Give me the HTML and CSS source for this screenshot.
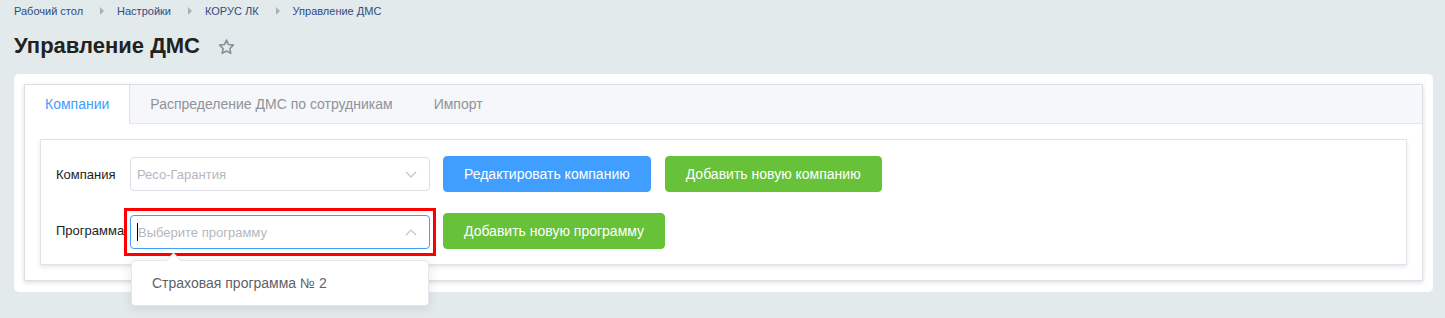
FILE: index.html
```html
<!DOCTYPE html>
<html lang="ru">
<head>
<meta charset="utf-8">
<title>Управление ДМС</title>
<link rel="stylesheet" href="styles.css">
</head>
<body>
<nav class="breadcrumb">
  <a class="crumb">Рабочий стол</a><span class="crumb-sep"></span>
  <a class="crumb">Настройки</a><span class="crumb-sep"></span>
  <a class="crumb">КОРУС ЛК</a><span class="crumb-sep"></span>
  <span class="crumb">Управление ДМС</span>
</nav>
<div class="page-head">
  <h1 class="page-title">Управление ДМС</h1>
  <svg class="star" width="19" height="18" viewBox="0 0 24 24"><path d="M12 2.8l2.8 5.9 6.4.8-4.7 4.5 1.2 6.4L12 17.3l-5.7 3.1 1.2-6.4-4.7-4.5 6.4-.8z" fill="none" stroke="#8a9199" stroke-width="2.2" stroke-linejoin="round"/></svg>
</div>
<div class="panel">
  <div class="tabs">
    <div class="tabs-header">
      <div class="tab active">Компании</div>
      <div class="tab">Распределение ДМС по сотрудникам</div>
      <div class="tab">Импорт</div>
    </div>
    <div class="tabs-content">
      <div class="form-card">
        <div class="form-row">
          <label class="form-label">Компания</label>
          <div class="select-wrap">
            <div class="select">
              <span class="select-value">Ресо-Гарантия</span>
              <svg class="chevron" width="12" height="7" viewBox="0 0 12 7"><polyline points="1,1 6,6 11,1" fill="none" stroke="#c0c4cc" stroke-width="1.2"/></svg>
            </div>
          </div>
          <button class="btn btn-primary">Редактировать компанию</button>
          <button class="btn btn-success btn-gap">Добавить новую компанию</button>
        </div>
        <div class="form-row row-gap">
          <label class="form-label">Программа</label>
          <div class="select-wrap">
            <div class="select focused">
              <span class="cursor"></span>
              <span class="select-value">Выберите программу</span>
              <svg class="chevron" width="12" height="7" viewBox="0 0 12 7"><polyline points="1,6 6,1 11,6" fill="none" stroke="#c0c4cc" stroke-width="1.2"/></svg>
            </div>
            <div class="highlight"></div>
            <div class="dropdown">
              <span class="dropdown-arrow"></span>
              <div class="dropdown-item">Страховая программа № 2</div>
            </div>
          </div>
          <button class="btn btn-success">Добавить новую программу</button>
        </div>
      </div>
    </div>
  </div>
</div>
</body>
</html>
```
FILE: styles.css
```css
html {
  background: #e3eaeb;
}
body {
  margin: 0;
  padding: 4px 12px 0 14px;
  min-height: 100vh;
  box-sizing: border-box;
  background: #e3eaeb;
  font-family: "Liberation Sans", Arial, sans-serif;
}
.breadcrumb {
  display: flex;
  align-items: center;
  height: 14px;
  font-size: 11px;
  line-height: 14px;
  color: #2f4c82;
}
.crumb {
  color: #2f4c82;
  text-decoration: none;
}
.crumb-sep {
  width: 0;
  height: 0;
  border-left: 4px solid #a9b1b8;
  border-top: 4px solid transparent;
  border-bottom: 4px solid transparent;
  margin: 0 13px 0 17px;
}
.page-head {
  display: flex;
  align-items: center;
  height: 30px;
  margin-top: 13px;
}
.page-title {
  margin: 0;
  font-size: 22px;
  line-height: 30px;
  font-weight: 700;
  color: #222;
}
.star {
  margin-left: 17px;
  margin-top: 1px;
}
.panel {
  margin-top: 13px;
  background: #fff;
  border-radius: 5px;
  padding: 10px 10px 11px 10px;
}
.tabs {
  border: 1px solid #dcdfe6;
  background: #fff;
  box-shadow: 0 2px 4px 0 rgba(0, 0, 0, 0.1), 0 0 6px 0 rgba(0, 0, 0, 0.04);
}
.tabs-header {
  display: flex;
  background: #f5f7fa;
  border-bottom: 1px solid #e4e7ed;
  height: 38px;
}
.tab {
  height: 38px;
  line-height: 38px;
  padding: 0 20px;
  font-size: 14px;
  color: #909399;
  border-right: 1px solid transparent;
  border-bottom: 1px solid transparent;
  margin-bottom: -1px;
}
.tab.active {
  background: #fff;
  color: #409eff;
  border-right-color: #dcdfe6;
  border-bottom-color: #fff;
}
.tabs-content {
  padding: 15px;
}
.form-card {
  border: 1px solid #e1e4ea;
  box-shadow: 0 2px 4px 0 rgba(0, 0, 0, 0.1);
  padding: 16px 15px 15px;
}
.form-row {
  display: flex;
  align-items: center;
}
.row-gap {
  margin-top: 20px;
}
.form-label {
  width: 74px;
  flex-shrink: 0;
  white-space: nowrap;
  font-size: 13px;
  color: #1d1d1d;
}
.select-wrap {
  position: relative;
  width: 300px;
  flex-shrink: 0;
}
.select {
  box-sizing: border-box;
  height: 34px;
  border: 1px solid #dcdfe6;
  border-radius: 4px;
  padding: 0 6px;
  display: flex;
  align-items: center;
  background: #fff;
  font-size: 13px;
  color: #b5b8be;
}
.select.focused {
  border-color: #409eff;
  margin-top: 3px;
}
.cursor {
  width: 1px;
  height: 18px;
  background: #000;
}
.chevron {
  margin-left: auto;
  margin-right: 6px;
}
.highlight {
  position: absolute;
  left: -6px;
  right: -6px;
  top: -4px;
  bottom: -7px;
  border: 3px solid #ff0000;
  pointer-events: none;
}
.dropdown {
  position: absolute;
  top: 48px;
  left: 1px;
  width: 298px;
  box-sizing: border-box;
  background: #fff;
  border: 1px solid #e4e7ed;
  border-radius: 4px;
  box-shadow: 0 2px 12px 0 rgba(0, 0, 0, 0.1);
  padding: 5px 0;
  z-index: 5;
}
.dropdown-arrow {
  position: absolute;
  top: -6px;
  left: 36px;
  width: 10px;
  height: 10px;
  background: #fff;
  border-left: 1px solid #e4e7ed;
  border-top: 1px solid #e4e7ed;
  transform: rotate(45deg);
}
.dropdown-item {
  position: relative;
  padding: 0 20px;
  line-height: 34px;
  font-size: 14px;
  color: #606266;
}
.btn {
  box-sizing: border-box;
  height: 36px;
  padding: 0 20px;
  border: 1px solid transparent;
  border-radius: 4px;
  font-family: "Liberation Sans", Arial, sans-serif;
  font-size: 14px;
  color: #fff;
  margin-left: 13px;
  white-space: nowrap;
}
.btn-gap {
  margin-left: 14px;
}
.btn-primary {
  background: #409eff;
  border-color: #409eff;
}
.btn-success {
  background: #67c23a;
  border-color: #67c23a;
}
```
